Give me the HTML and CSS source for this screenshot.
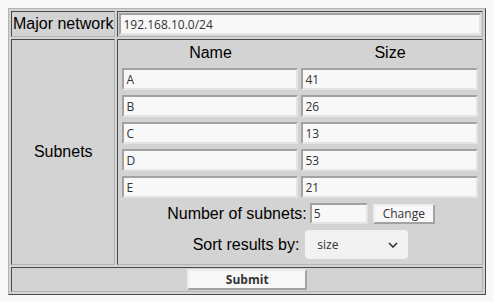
FILE: index.html
```html
<!DOCTYPE html>
<html>
<head>
<meta charset="utf-8">
<link rel="stylesheet" href="styles.css">
</head>
<body>
<table class="main">
  <tr>
    <td class="label row1">Major network</td>
    <td class="field row1"><input class="txt wide" type="text" value="192.168.10.0/24"></td>
  </tr>
  <tr>
    <td class="label">Subnets</td>
    <td class="field">
      <div class="subnets">
        <div class="head">Name</div>
        <div class="head">Size</div>
        <input class="txt" type="text" value="A">
        <input class="txt" type="text" value="41">
        <input class="txt" type="text" value="B">
        <input class="txt" type="text" value="26">
        <input class="txt" type="text" value="C">
        <input class="txt" type="text" value="13">
        <input class="txt" type="text" value="D">
        <input class="txt" type="text" value="53">
        <input class="txt" type="text" value="E">
        <input class="txt" type="text" value="21">
      </div>
      <div class="count">
        <span class="lbl">Number of subnets:</span>
        <input class="txt num" type="text" value="5">
        <button class="btn change" type="button">Change</button>
      </div>
      <div class="sort">
        <span class="lbl">Sort results by:</span>
        <span class="select">size
          <svg class="chev" width="10" height="6" viewBox="0 0 10 6"><path d="M1 1 L5 5 L9 1" fill="none" stroke="#333" stroke-width="1.6"/></svg>
        </span>
      </div>
    </td>
  </tr>
  <tr>
    <td class="submitrow" colspan="2"><button class="btn submit" type="button">Submit</button></td>
  </tr>
</table>
</body>
</html>
```

FILE: styles.css
```css
html, body {
  margin: 0;
  padding: 0;
}
body {
  background: #f8f8f8;
  padding: 8px;
  font-family: "Liberation Sans", Arial, sans-serif;
  font-size: 16px;
  color: #000;
}
.main {
  border-collapse: separate;
  border-spacing: 2px;
  background: #d3d3d3;
  border: 1px solid;
  border-color: #b4b4b4 #4a4a4a #4a4a4a #b4b4b4;
}
.main td {
  border: 1px solid;
  border-color: #4a4a4a #b4b4b4 #b4b4b4 #4a4a4a;
  padding: 1px;
}
.label {
  width: 101px;
  text-align: center;
  vertical-align: middle;
  white-space: nowrap;
}
.field {
  width: 362px;
  vertical-align: top;
}
.row1 {
  height: 22px;
}
.txt {
  box-sizing: border-box;
  display: block;
  margin: 0;
  height: 22px;
  padding: 0 2px;
  background: #f8f8f8;
  border: 2px solid;
  border-color: #a2a2a2 #e4e4e4 #e4e4e4 #a2a2a2;
  font-family: "Open Sans", "Noto Sans", sans-serif;
  font-size: 12px;
  color: #333;
  outline: none;
}
.wide {
  width: 362px;
}
.subnets {
  display: grid;
  grid-template-columns: 176px 177px;
  column-gap: 3px;
  row-gap: 5px;
  padding: 0 2px 0 3px;
}
.head {
  text-align: center;
  height: 20px;
  line-height: 20px;
  padding-top: 2px;
}
.subnets .txt {
  width: 100%;
}
.count {
  display: flex;
  justify-content: center;
  align-items: center;
  margin-top: 5px;
  height: 21px;
  padding-left: 1px;
}
.count .lbl {
  margin-right: 3px;
}
.num {
  display: inline-block;
  width: 58px;
  height: 21px;
  margin-right: 5px;
}
.btn {
  box-sizing: border-box;
  margin: 0;
  background: #f8f8f8;
  border: 2px solid;
  border-color: #ececec #a2a2a2 #a2a2a2 #ececec;
  font-family: "Open Sans", "Noto Sans", sans-serif;
  font-size: 12px;
  color: #333;
  padding: 0;
}
.change {
  width: 62px;
  height: 20px;
  line-height: 16px;
}
.sort {
  display: flex;
  justify-content: center;
  align-items: center;
  margin-top: 6px;
  margin-bottom: 4px;
  height: 29px;
}
.sort .lbl {
  margin-right: 6px;
}
.select {
  box-sizing: border-box;
  display: flex;
  align-items: center;
  justify-content: space-between;
  width: 103px;
  height: 29px;
  padding: 0 10px 0 12px;
  background: #f2f2f2;
  border-radius: 4px;
  font-family: "Open Sans", "Noto Sans", sans-serif;
  font-size: 12px;
  color: #333;
}
.chev {
  display: block;
}
.submitrow {
  text-align: center;
  height: 21px;
}
.submit {
  width: 120px;
  height: 21px;
  font-weight: bold;
  vertical-align: top;
}
```
